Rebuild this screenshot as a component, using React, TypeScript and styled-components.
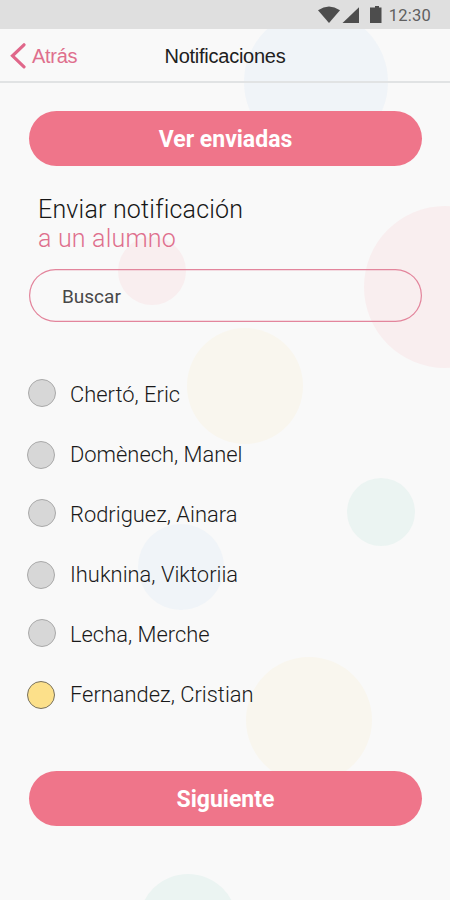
import React from "react";
import styled, { createGlobalStyle } from "styled-components";

const pink = "#ef758a";
const rose = "#df6f8d";

const GlobalStyle = createGlobalStyle`
  *, *::before, *::after { box-sizing: border-box; }
  body { margin: 0; background: #f9f9f9; }
  button, input { font: inherit; }
`;

const Screen = styled.div`
  position: relative;
  isolation: isolate;
  display: flex;
  flex-direction: column;
  width: 450px;
  height: 900px;
  overflow: hidden;
  background: #f9f9f9;
  color: #1a1a1a;
  font-family: Roboto, sans-serif;
`;

const Bubble = styled.span<{ $x: number; $y: number; $r: number; $color: string }>`
  position: absolute;
  z-index: -1;
  left: ${(p) => p.$x - p.$r}px;
  top: ${(p) => p.$y - p.$r}px;
  width: ${(p) => p.$r * 2}px;
  height: ${(p) => p.$r * 2}px;
  border-radius: 50%;
  background: ${(p) => p.$color};
`;

const StatusBar = styled.div`
  display: flex;
  justify-content: flex-end;
  height: 29px;
  flex: none;
  padding-right: 19px;
  background: #dfdfdf;
`;

const StatusIcons = styled.svg`
  width: 66px;
  height: 29px;
  margin-right: 5px;
  fill: #4d4d4d;
`;

const Clock = styled.span`
  font-size: 16.5px;
  line-height: 31px;
  letter-spacing: 0.25px;
  color: #606060;
`;

const NavBar = styled.header`
  display: grid;
  grid-template-columns: 1fr auto 1fr;
  align-items: center;
  height: 54px;
  flex: none;
  padding: 0 10px;
  border-bottom: 2px solid #e1e3e4;
`;

const BackButton = styled.button`
  display: flex;
  align-items: center;
  gap: 6px;
  justify-self: start;
  padding: 2px 0 0;
  border: 0;
  background: none;
  color: ${rose};
  font-family: "Liberation Sans", sans-serif;
  font-size: 20px;
  line-height: 26px;
  letter-spacing: -0.3px;
`;

const Chevron = styled.svg`
  width: 16px;
  height: 26px;
  fill: none;
  stroke: #e0678a;
  stroke-width: 3.2;
  stroke-linecap: round;
`;

const NavTitle = styled.h1`
  margin: 2px 0 0;
  font-family: "Liberation Sans", sans-serif;
  font-size: 20px;
  font-weight: 400;
  line-height: 26px;
  letter-spacing: -0.25px;
  color: #202020;
`;

const Content = styled.main`
  display: flex;
  flex-direction: column;
  padding: 28px 28px 0 29px;
`;

const PillButton = styled.button`
  height: 55px;
  flex: none;
  padding: 2px 0 0;
  border: 0;
  border-radius: 28px;
  background: ${pink};
  color: #fff;
  font-size: 23px;
  font-weight: 700;
  line-height: 53px;
`;

const Heading = styled.h2`
  margin: 29px 0 0 9px;
  font-size: 25px;
  font-weight: 300;
  line-height: 29px;
  letter-spacing: 0.2px;
  color: #161616;
`;

const Accent = styled.span`
  display: block;
  color: ${rose};
`;

const SearchInput = styled.input`
  height: 53px;
  margin-top: 16px;
  padding: 2px 33px 0;
  border: 0;
  border-radius: 27px;
  outline: none;
  background: transparent;
  box-shadow: inset 0 0 0 1.2px #e3859c;
  font-size: 19px;
  color: #484848;
  &::placeholder { color: #484848; opacity: 1; }
`;

const StudentList = styled.ul`
  display: flex;
  flex-direction: column;
  margin: 42px 0 47px;
  padding: 0;
  list-style: none;
`;

const StudentRow = styled.li`
  display: grid;
  grid-template-columns: 41px 1fr;
  height: 60px;
  align-items: center;
`;

const Radio = styled.span<{ $selected?: boolean; $raised: boolean }>`
  width: 28px;
  height: 28px;
  margin-top: ${(p) => (p.$raised ? "-2px" : "2px")};
  margin-left: ${(p) => (p.$raised ? "-1px" : "-2px")};
  border: 1px solid ${(p) => (p.$selected ? "#77715f" : "#a9a9a9")};
  border-radius: 50%;
  background: ${(p) => (p.$selected ? "#fce08a" : "#d7d7d7")};
`;

const StudentName = styled.span`
  padding-top: 1px;
  font-size: 21.9px;
  font-weight: 300;
  line-height: 28px;
`;

const bubbles = [
  { x: 316, y: 82, r: 72, color: "#f0f4f8" },
  { x: 152, y: 271, r: 34, color: "#f9eeef" },
  { x: 445, y: 287, r: 81, color: "#f9eeef" },
  { x: 245, y: 386, r: 58, color: "#f9f6ee" },
  { x: 381, y: 512, r: 34, color: "#ebf4f2" },
  { x: 181, y: 567, r: 43, color: "#f0f4f8" },
  { x: 309, y: 720, r: 63, color: "#f9f6ee" },
  { x: 188, y: 923, r: 49, color: "#ebf4f2" },
];

const students = [
  "Chertó, Eric",
  "Domènech, Manel",
  "Rodriguez, Ainara",
  "Ihuknina, Viktoriia",
  "Lecha, Merche",
  "Fernandez, Cristian",
];

export default function App() {
  return (
    <>
      <GlobalStyle />
      <Screen>
        {bubbles.map((b) => (
          <Bubble key={`${b.x}-${b.y}`} $x={b.x} $y={b.y} $r={b.r} $color={b.color} />
        ))}
        <StatusBar>
          <StatusIcons viewBox="0 0 66 29" aria-hidden="true">
            <path d="M0 10.2Q11 3 22 10.2L11 23Z" />
            <path d="M41 7.2V23H24.5Z" />
            <path d="M55 7.6h2V6h4v1.6h2.5V23H52V7.6Z" />
          </StatusIcons>
          <Clock>12:30</Clock>
        </StatusBar>
        <NavBar>
          <BackButton>
            <Chevron viewBox="0 0 16 26" aria-hidden="true">
              <path d="M14 1.8 2.5 12.8 14 23.8" />
            </Chevron>
            Atrás
          </BackButton>
          <NavTitle>Notificaciones</NavTitle>
        </NavBar>
        <Content>
          <PillButton>Ver enviadas</PillButton>
          <Heading>
            Enviar notificación
            <Accent>a un alumno</Accent>
          </Heading>
          <SearchInput placeholder="Buscar" aria-label="Buscar" />
          <StudentList>
            {students.map((name, i) => (
              <StudentRow key={name}>
                <Radio $raised={i % 2 === 0} $selected={i === 5} />
                <StudentName>{name}</StudentName>
              </StudentRow>
            ))}
          </StudentList>
          <PillButton>Siguiente</PillButton>
        </Content>
      </Screen>
    </>
  );
}
